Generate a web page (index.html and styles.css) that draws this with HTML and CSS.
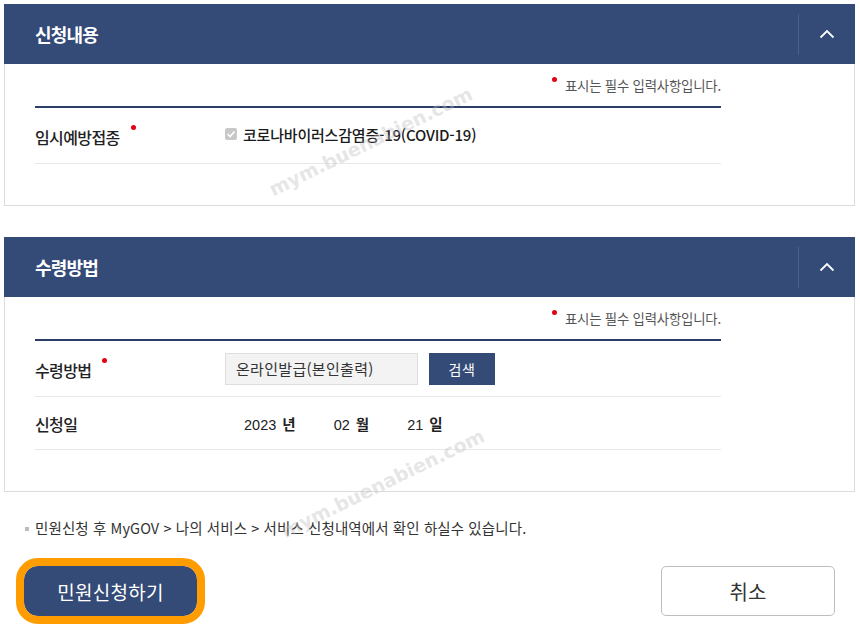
FILE: index.html
```html
<!DOCTYPE html>
<html lang="ko">
<head>
    <meta charset="UTF-8">
    <meta name="viewport" content="width=device-width, initial-scale=1.0">
    <title>민원신청</title>
    <link rel="stylesheet" href="styles.css">
</head>
<body>
    <div class="page">

        <!-- 신청내용 -->
        <section class="panel">
            <div class="panel-head">
                <h2 class="panel-title">신청내용</h2>
                <button class="panel-toggle" aria-label="접기">
                    <svg width="16" height="10" viewBox="0 0 16 10"><polyline points="1.5,8.5 8,2 14.5,8.5" fill="none" stroke="#fff" stroke-width="1.8"/></svg>
                </button>
            </div>
            <div class="panel-body">
                <p class="req-note"><span class="req-dot"></span>표시는 필수 입력사항입니다.</p>
                <div class="form-table">
                    <div class="form-row">
                        <div class="form-label">임시예방접종<span class="req-dot label-dot"></span></div>
                        <div class="form-value">
                            <label class="check">
                                <span class="check-box">
                                    <svg width="10" height="10" viewBox="0 0 10 10"><polyline points="1.5,5 4,7.5 8.5,2.5" fill="none" stroke="#fff" stroke-width="1.6"/></svg>
                                </span>
                                코로나바이러스감염증-19(COVID-19)
                            </label>
                        </div>
                    </div>
                </div>
            </div>
        </section>

        <!-- 수령방법 -->
        <section class="panel">
            <div class="panel-head">
                <h2 class="panel-title">수령방법</h2>
                <button class="panel-toggle" aria-label="접기">
                    <svg width="16" height="10" viewBox="0 0 16 10"><polyline points="1.5,8.5 8,2 14.5,8.5" fill="none" stroke="#fff" stroke-width="1.8"/></svg>
                </button>
            </div>
            <div class="panel-body">
                <p class="req-note"><span class="req-dot"></span>표시는 필수 입력사항입니다.</p>
                <div class="form-table">
                    <div class="form-row">
                        <div class="form-label">수령방법<span class="req-dot label-dot"></span></div>
                        <div class="form-value">
                            <div class="text-box">온라인발급(본인출력)</div>
                            <button class="btn-search">검색</button>
                        </div>
                    </div>
                    <div class="form-row">
                        <div class="form-label">신청일</div>
                        <div class="form-value date">
                            <span class="date-part">2023 <b>년</b></span>
                            <span class="date-part">02 <b>월</b></span>
                            <span class="date-part">21 <b>일</b></span>
                        </div>
                    </div>
                </div>
            </div>
        </section>

        <p class="info">민원신청 후 MyGOV &gt; 나의 서비스 &gt; 서비스 신청내역에서 확인 하실수 있습니다.</p>

        <div class="actions">
            <button class="btn-apply">민원신청하기</button>
            <button class="btn-cancel">취소</button>
        </div>

        <span class="watermark wm1">mym.buenabien.com</span>
        <span class="watermark wm2">mym.buenabien.com</span>
    </div>
</body>
</html>
```

FILE: styles.css
```css
/* Global */
body {
    margin: 0;
    font-family: "Noto Sans CJK KR", "Noto Sans", sans-serif;
    color: #222;
    background-color: #fff;
}

.page {
    position: relative;
    padding: 4px 5px 0 4px;
    overflow: hidden;
}

/* Panels */
.panel {
    margin-bottom: 31px;
}

.panel-head {
    display: flex;
    align-items: center;
    height: 60px;
    padding-left: 31px;
    background-color: #344a77;
}

.panel-title {
    flex: 1;
    margin: 0;
    font-size: 18px;
    font-weight: 700;
    color: #fff;
    letter-spacing: -0.8px;
}

.panel-toggle {
    display: flex;
    align-items: center;
    justify-content: center;
    width: 57px;
    height: 41px;
    padding: 0;
    border: none;
    border-left: 1px solid rgba(255, 255, 255, 0.12);
    background: none;
    cursor: pointer;
}

.panel-body {
    padding: 0 133px 41px 30px;
    border: 1px solid #dcdcdc;
    border-top: none;
}

/* Required note */
.req-note {
    display: flex;
    justify-content: flex-end;
    align-items: center;
    margin: 0;
    padding: 11px 0 11px;
    font-size: 13.4px;
    line-height: 20px;
    color: #555;
    letter-spacing: -0.2px;
}

.req-dot {
    display: inline-block;
    width: 5px;
    height: 5px;
    margin: -12px 8px 0 0;
    border-radius: 50%;
    background-color: #e60012;
}

.label-dot {
    position: relative;
    top: -14px;
    margin: 0 0 0 11px;
}

/* Form table */
.form-table {
    border-top: 2px solid #2b3e68;
}

.form-row {
    display: flex;
    align-items: center;
    height: 54px;
    border-bottom: 1px solid #e8e8e8;
}

.form-row:first-child {
    height: 55px;
}

.form-row:last-child:not(:first-child) {
    height: 52px;
}

.form-label {
    width: 190px;
    font-size: 16px;
    font-weight: 500;
    color: #222;
    letter-spacing: -0.6px;
    padding-top: 2px;
}

.form-value {
    display: flex;
    align-items: center;
    gap: 11px;
}

/* Checkbox */
.check {
    display: flex;
    align-items: center;
    gap: 6px;
    font-size: 15px;
    font-weight: 500;
    color: #1a1a1a;
    letter-spacing: -0.2px;
    margin-top: -3px;
}

.check-box {
    display: flex;
    align-items: center;
    justify-content: center;
    width: 12px;
    height: 12px;
    border-radius: 2px;
    background-color: #c8c8c8;
}

/* Input + search */
.text-box {
    box-sizing: border-box;
    width: 193px;
    height: 32px;
    padding-left: 10px;
    border: 1px solid #dedede;
    background-color: #f3f3f3;
    font-size: 15px;
    line-height: 30px;
    color: #333;
    letter-spacing: 0.3px;
}

.btn-search {
    width: 66px;
    height: 32px;
    padding: 0;
    border: none;
    background-color: #344a77;
    font-family: inherit;
    font-size: 14px;
    color: #fff;
    letter-spacing: 0.5px;
    cursor: pointer;
}

/* Date */
.date {
    gap: 0;
    padding-left: 19px;
}

.date-part {
    font-family: "Liberation Sans", Arial, sans-serif;
    font-size: 14.5px;
    color: #222;
}

.date-part + .date-part {
    margin-left: 38px;
}

.date-part b {
    font-family: "Noto Sans CJK KR", sans-serif;
    font-weight: 700;
    margin-left: 2px;
}

/* Info text */
.info {
    position: relative;
    margin: -6px 0 0 31px;
    font-size: 14.5px;
    color: #333;
    letter-spacing: 0.1px;
}

.info::before {
    content: "";
    position: absolute;
    left: -10px;
    top: 10px;
    width: 4px;
    height: 4px;
    background-color: #bbb;
}

/* Action buttons */
.actions {
    display: flex;
    justify-content: space-between;
    align-items: center;
    margin: 20px 0 0 12px;
    padding-right: 20px;
}

.btn-apply {
    box-sizing: border-box;
    width: 189px;
    height: 66px;
    border: 8px solid #ff9c00;
    border-radius: 22px;
    background-color: #344a77;
    background-clip: padding-box;
    font-family: inherit;
    font-size: 19px;
    color: #fff;
    letter-spacing: 0.3px;
    cursor: pointer;
    outline: none;
}

.btn-cancel {
    box-sizing: border-box;
    width: 174px;
    height: 50px;
    border: 1px solid #bdbdbd;
    border-radius: 5px;
    background-color: #fff;
    font-family: inherit;
    font-size: 20px;
    color: #333;
    cursor: pointer;
}

/* Watermark */
.watermark {
    position: absolute;
    font-family: "DejaVu Sans", sans-serif;
    font-weight: 700;
    font-size: 19px;
    color: rgba(190, 190, 190, 0.4);
    transform: rotate(-26deg);
    transform-origin: left bottom;
    pointer-events: none;
    white-space: nowrap;
}

.wm1 {
    left: 275px;
    top: 178px;
}

.wm2 {
    left: 287px;
    top: 520px;
}
```
